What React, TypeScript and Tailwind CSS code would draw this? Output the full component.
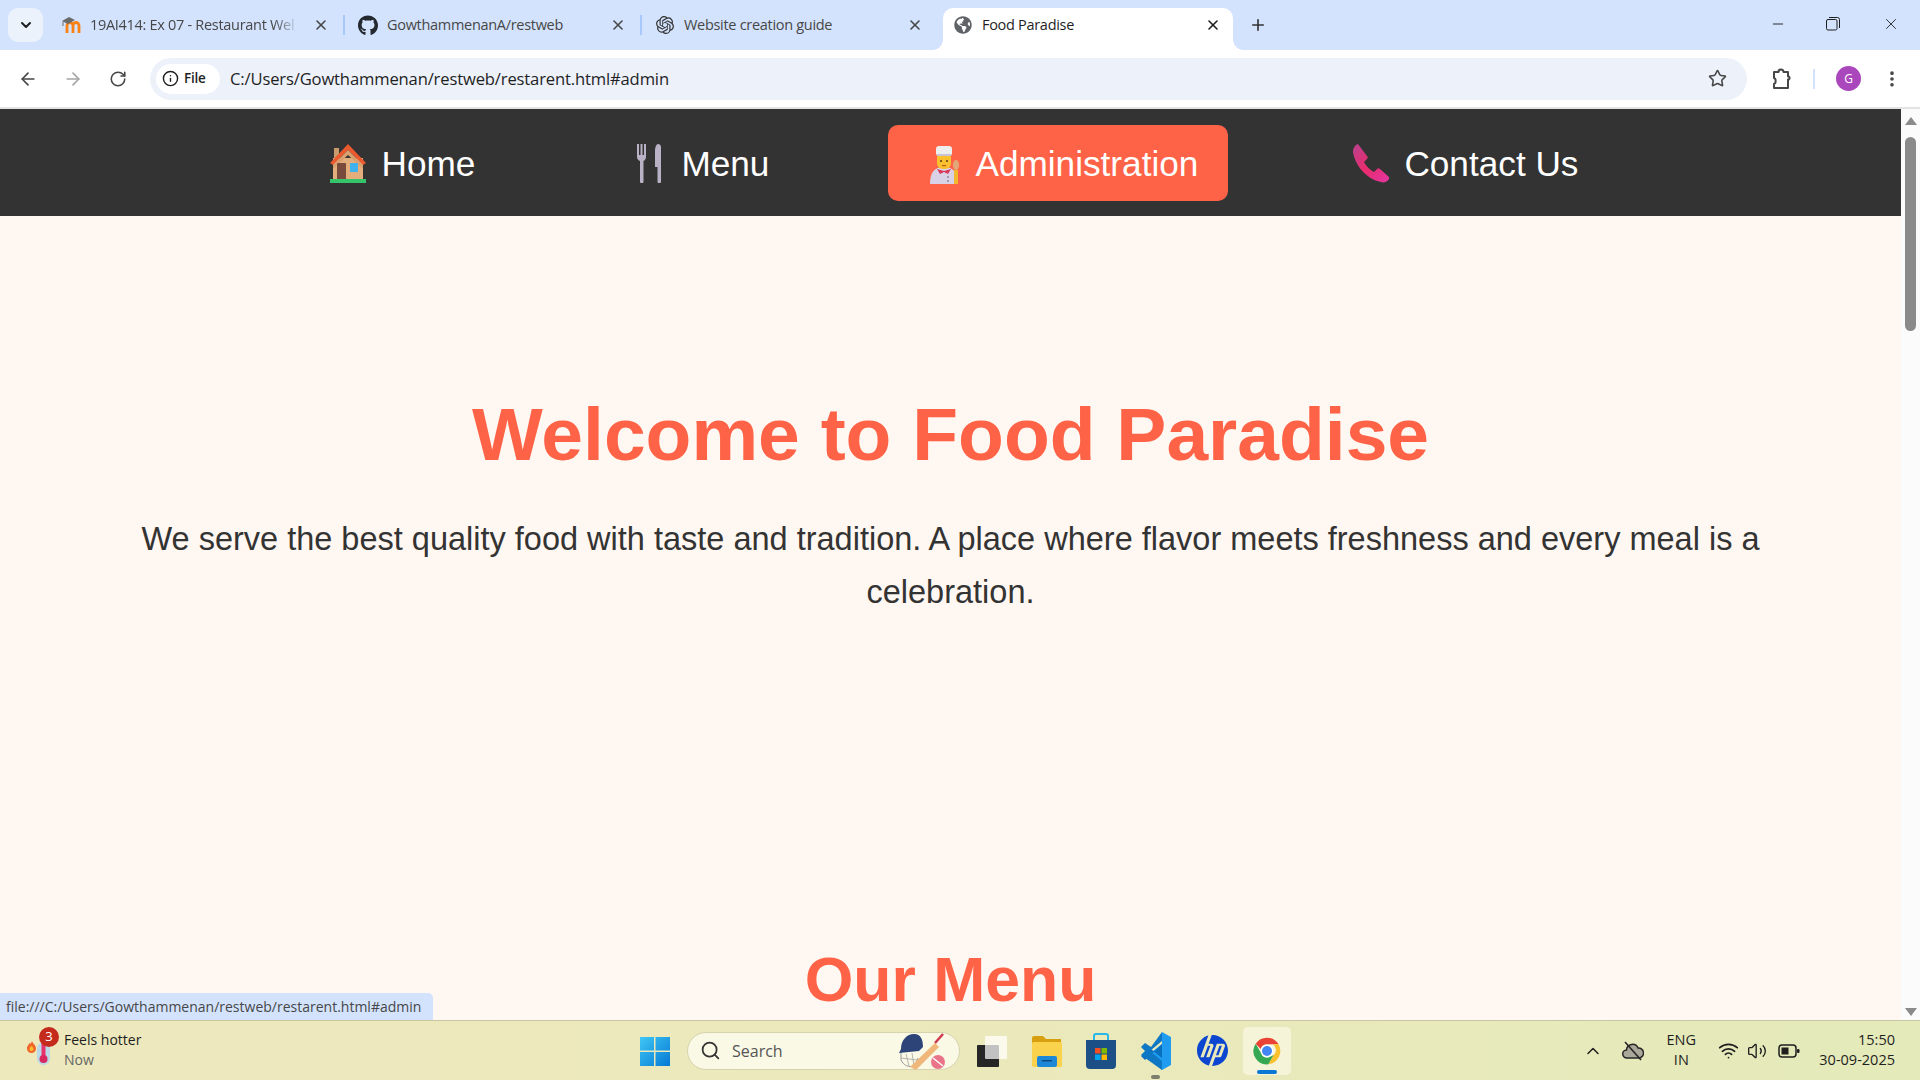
import React from "react";
import { FaGithub, FaGlobeAmericas } from "react-icons/fa";
import { SiOpenai, SiHp } from "react-icons/si";
import { ArrowLeft, ArrowRight, RotateCw, Info, Star, EllipsisVertical, X, Plus, Minus, ChevronDown, ChevronUp, Search, Wifi, Volume2 } from "lucide-react";

const ui = "font-['Open_Sans','Noto_Sans',sans-serif]";

function MoodleIcon() {
  return (
    <svg width="20" height="18" viewBox="0 0 20 18">
      <path d="M6 17V9.500a3 3 0 0 1 6 0V17M12 9.500a3 3 0 0 1 6 0V17" fill="none" stroke="#f98012" strokeWidth="2.800" />
      <path d="M1 5 L8 1 L14 4 L7 8 Z" fill="#6b6b6b" />
      <path d="M2 5.500V10" stroke="#6b6b6b" strokeWidth="1" />
    </svg>
  );
}

function Tab({ icon, title, active, sep, fade }: { icon: React.ReactNode; title: string; active?: boolean; sep?: boolean; fade?: boolean }) {
  return (
    <div className={`relative flex items-center h-[42px] pb-[8px] ${active ? "w-[290px] bg-white rounded-t-[10px] pl-[10px] pr-[12px] ml-[4px] mr-[5px]" : "w-[297px] pl-[13px] pr-[16px]"}`}>
      <span className="w-[20px] h-[20px] flex items-center justify-center shrink-0">{icon}</span>
      <span className={`ml-[9px] flex-1 overflow-hidden whitespace-nowrap text-[14.5px] tracking-[-0.3px] ${active ? "text-[#1f1f1f]" : "text-[#474747]"} ${fade ? "[mask-image:linear-gradient(90deg,#000_88%,transparent)] mr-[14px]" : ""}`}>{title}</span>
      <X size={16} strokeWidth={2.4} className={active ? "text-[#1f1f1f] shrink-0" : "text-[#474747] shrink-0"} />
      {sep && <span className="absolute right-0 top-[7px] w-[2px] h-[20px] bg-[#a8c7fa]" />}
      {active && <span className="absolute left-[-10px] bottom-0 w-[10px] h-[10px] bg-[radial-gradient(circle_at_0_0,#d3e3fd_9.5px,#ffffff_10px)]" />}
      {active && <span className="absolute right-[-10px] bottom-0 w-[10px] h-[10px] bg-[radial-gradient(circle_at_100%_0,#d3e3fd_9.5px,#ffffff_10px)]" />}
    </div>
  );
}

function HouseIcon() {
  return (
    <svg width="38" height="40" viewBox="0 0 38 40">
      <rect x="5" y="5" width="5" height="14" fill="#c99a6b" />
      <rect x="4" y="15" width="30" height="22" fill="#e3ad7c" />
      <path d="M19 1 L37 20 L34 22 L19 7 L4 22 L1 20 Z" fill="#ea5a2e" />
      <path d="M19 7 L34 22 L34 26 L19 12 L4 26 L4 22 Z" fill="#d9a06f" />
      <rect x="8" y="20" width="9" height="17" rx="1" fill="#7a4a3c" />
      <rect x="21" y="20" width="8" height="9" rx="1" fill="#3fb2ee" />
      <rect x="1" y="36" width="36" height="4" fill="#35c46a" />
    </svg>
  );
}
function CutleryIcon() {
  return (
    <svg width="30" height="40" viewBox="0 0 30 40" fill="#b9b2c6" className="ml-[6px]">
      <path d="M1 1h2v11h1.500V1h2v11H8V1h2v13c0 2-1.500 3.500-2.500 4V39a1.800 1.800 0 0 1-3.500 0V18C2.500 17.500 1 16 1 14Z" />
      <path d="M19 8c0-4 1.500-7 3-7s3 1 3 3v35a1.800 1.800 0 0 1-3.500 0V24H19Z" />
    </svg>
  );
}
function ChefIcon() {
  return (
    <svg width="32" height="42" viewBox="0 0 32 42" className="ml-[4px]">
      <path d="M2 42c0-10 3-17 14-17s13 7 13 17Z" fill="#d9d2e6" />
      <rect x="26" y="28" width="4" height="14" fill="#f2b92e" />
      <ellipse cx="28" cy="23" rx="3" ry="5" fill="#e0a878" />
      <rect x="8" y="4" width="16" height="10" rx="3" fill="#eeeeee" />
      <rect x="9" y="12" width="14" height="3" fill="#c9c4d4" />
      <path d="M9 14h14v7c0 4-3 6-7 6s-7-2-7-6Z" fill="#fbc02d" />
      <circle cx="13" cy="19" r="1" fill="#5b3a1d" />
      <circle cx="19" cy="19" r="1" fill="#5b3a1d" />
      <rect x="14" y="23" width="4" height="1.200" fill="#b55a20" />
      <path d="M9 27l7 2 7-2-3 5-4-2-4 2Z" fill="#d8365a" />
      <circle cx="20" cy="35" r="1" fill="#8f88a0" />
      <circle cx="20" cy="39" r="1" fill="#8f88a0" />
    </svg>
  );
}
function PhoneIcon() {
  return (
    <svg width="38" height="40" viewBox="0 0 38 40">
      <defs>
        <linearGradient id="ph" x1="0" y1="0" x2="1" y2="1">
          <stop offset="0" stopColor="#b8418e" />
          <stop offset="0.5" stopColor="#ea2c6e" />
          <stop offset="1" stopColor="#e236a2" />
        </linearGradient>
      </defs>
      <path d="M6 1 L15 13 C16 14 16 15 15 16 L12 19 C14 23 18 27 22 29 L25 26 C26 25 27 25 28 26 L37 34 L37 36 C35 39 32 40 29 39 C14 36 3 22 1 9 C1 5 3 2 6 1 Z" fill="url(#ph)" />
    </svg>
  );
}

function NavItem({ icon, label, active }: { icon: React.ReactNode; label: string; active?: boolean }) {
  return (
    <a className={`flex items-center h-[76px] px-[30px] rounded-[10px] text-[35.2px] text-white ${active ? "bg-[#ff6347]" : ""}`}>
      <span className="w-[47px] h-[44px] mr-[10px] flex items-center justify-center shrink-0">{icon}</span>
      <span className="pt-[3px]">{label}</span>
    </a>
  );
}

function WinLogo() {
  return (
    <svg width="30" height="30" viewBox="0 0 30 30">
      <defs>
        <linearGradient id="win" x1="0" y1="0" x2="1" y2="1">
          <stop offset="0" stopColor="#3fc8f5" />
          <stop offset="1" stopColor="#0678d4" />
        </linearGradient>
      </defs>
      <path d="M0 1h14v13.500H0ZM15.500 1H30v13.500H15.500ZM0 16h14v14H0ZM15.500 16H30v14H15.500Z" fill="url(#win)" />
    </svg>
  );
}
function TaskView() {
  return (
    <svg width="32" height="32" viewBox="0 0 32 32">
      <rect x="1" y="10" width="22" height="22" rx="1" fill="#262626" />
      <rect x="9" y="1" width="22" height="23" rx="1" fill="#ffffff" fillOpacity="0.72" />
    </svg>
  );
}
function Explorer() {
  return (
    <svg width="32" height="32" viewBox="0 0 32 32">
      <path d="M1 3a2 2 0 0 1 2-2h9l3 3h15v8H1Z" fill="#d8a010" />
      <rect x="1" y="7" width="30" height="25" rx="1.500" fill="#fbd24c" />
      <rect x="6" y="21" width="20" height="11" rx="2" fill="#1e88d8" />
      <rect x="11" y="25" width="10" height="1.500" fill="#0c4a80" />
    </svg>
  );
}
function Store() {
  return (
    <svg width="30" height="36" viewBox="0 0 30 36">
      <path d="M8 8V3a2 2 0 0 1 2-2h10a2 2 0 0 1 2 2v5" fill="none" stroke="#29b6e8" strokeWidth="2" />
      <path d="M0 7h30v25a4 4 0 0 1-4 4H4a4 4 0 0 1-4-4Z" fill="#1b4f86" />
      <rect x="9" y="15" width="5.500" height="5.500" fill="#f25022" />
      <rect x="15.500" y="15" width="5.500" height="5.500" fill="#7fba00" />
      <rect x="9" y="21.500" width="5.500" height="5.500" fill="#00a4ef" />
      <rect x="15.500" y="21.500" width="5.500" height="5.500" fill="#ffb900" />
    </svg>
  );
}
function VsCode() {
  return (
    <svg width="32" height="40" viewBox="0 0 32 40">
      <path d="M22 1 L31 6 V34 L22 39 L8 24 L22 13 Z" fill="#1f9cf0" />
      <path d="M22 13 V27 L6 14 L2 17 L8 20 L1 25 L5 29 L22 13 Z" fill="#0a6fbd" />
      <path d="M22 1 V10 L10 20 L22 30 V39 L1 24 L5 20 L1 16 L5 12 L11 16 Z" fill="#0f78c4" />
    </svg>
  );
}
function Chrome() {
  return (
    <svg width="32" height="38" viewBox="0 0 48 48">
      <path d="M24 4a20 20 0 0 1 17.320 10H24a10 10 0 0 0-9.500 6.900L7 13A20 20 0 0 1 24 4Z" fill="#ea4335" />
      <path d="M41.320 14A20 20 0 0 1 26 43.900L34 30a10 10 0 0 0-1-16Z" fill="#fbc02d" />
      <path d="M26 43.900A20 20 0 0 1 7 13l8 14a10 10 0 0 0 11 6.800l8-3.800Z" fill="#34a853" />
      <circle cx="24" cy="24" r="9.500" fill="#ffffff" />
      <circle cx="24" cy="24" r="7.500" fill="#4285f4" />
    </svg>
  );
}
function WeatherIcon() {
  return (
    <div className="relative w-[34px] h-[40px] shrink-0">
      <svg width="34" height="40" viewBox="0 0 34 40" className="absolute left-0 top-0">
        <rect x="11" y="12" width="13" height="23" rx="6.500" fill="#bcd9e8" />
        <rect x="15.500" y="12" width="4" height="18" fill="#e8326e" />
        <circle cx="17.500" cy="29" r="4" fill="#d9285f" />
        <path d="M6 11c1 3 4 4 4 7.500a4.500 4.500 0 0 1-9 0c0-3 2-3 2-5.500 1 1 2 1 3-2Z" fill="#f0662a" />
        <path d="M5.500 16c1 1 2 2 2 3a2 2 0 0 1-4 0c0-1 1-2 2-3Z" fill="#fbc02d" />
      </svg>
      <span className="absolute left-[13px] top-[-3px] w-[20px] h-[20px] rounded-full bg-[#c42b1c] text-white text-[13px] flex items-center justify-center">3</span>
    </div>
  );
}
function SearchArt() {
  return (
    <svg width="48" height="38" viewBox="0 0 48 38">
      <path d="M4 20v8c2 5 8 8 14 6l3-8" fill="none" stroke="#9a9a9a" strokeWidth="1" />
      <path d="M9 22l3 12M15 21l2 13M4 26l16 2" fill="none" stroke="#a5a5a5" strokeWidth="0.800" />
      <path d="M4 17 C4 8 10 2 17 2 C24 2 26 8 26 15 L22 19 L2 21 Z" fill="#2c4478" />
      <path d="M13 35 L38 11 L42 15 L19 38 Z" fill="#efb77a" />
      <path d="M38 11 L46 2" stroke="#d03a4e" strokeWidth="2.500" />
      <circle cx="41" cy="30" r="7" fill="#e9748a" />
      <path d="M36 26 L46 34" stroke="#ffffff" strokeWidth="1.500" />
    </svg>
  );
}
function ExtensionIcon() {
  return (
    <svg width="22" height="22" viewBox="0 0 22 22" fill="none" stroke="#474747" strokeWidth="2" strokeLinejoin="round">
      <path d="M3 4h4.500a2.500 2.500 0 0 1 5 0H17v4.500h1a2.500 2.500 0 0 1 0 3h-1V20H3v-4a2.500 2.500 0 0 0 1.500-3A2.500 2.500 0 0 0 3 10Z" />
    </svg>
  );
}
function CloudSlash() {
  return (
    <svg width="22" height="20" viewBox="0 0 22 20">
      <path d="M5 17a4 4 0 0 1-.5-8A6 6 0 0 1 16 7a4.500 4.500 0 0 1 1 10Z" fill="#a9a89a" stroke="#262626" strokeWidth="1.500" />
      <path d="M3 1 L19 19" stroke="#262626" strokeWidth="1.600" />
    </svg>
  );
}

export default function App() {
  return (
    <div className={`h-screen w-full flex flex-col overflow-hidden bg-white ${ui}`}>
      {/* Tab strip */}
      <div className="h-[50px] bg-[#d3e3fd] flex items-end shrink-0">
        <div className="w-[35px] h-[34px] ml-[8px] mb-[8px] rounded-[10px] bg-[#ecf2fc] flex items-center justify-center shrink-0">
          <ChevronDown size={16} strokeWidth={3} className="text-[#1f1f1f]" />
        </div>
        <div className="flex items-end ml-[5px]">
          <Tab icon={<MoodleIcon />} title="19AI414: Ex 07 - Restaurant Wel" sep fade />
          <Tab icon={<FaGithub size={21} className="text-[#24292f]" />} title="GowthammenanA/restweb" sep />
          <Tab icon={<SiOpenai size={18} className="text-[#333333]" />} title="Website creation guide" />
          <Tab icon={<FaGlobeAmericas size={18} className="text-[#5f6368]" />} title="Food Paradise" active />
        </div>
        <Plus size={18} strokeWidth={2.2} className="ml-[11px] mb-[16px] text-[#333333]" />
        <div className="ml-auto flex items-center h-[50px] pb-[2px]">
          <Minus size={16} strokeWidth={1.4} className="text-[#1f1f1f]" />
          <svg width="14" height="14" viewBox="0 0 14 14" className="ml-[40px]" fill="none" stroke="#1f1f1f" strokeWidth="1">
            <rect x="0.500" y="2.500" width="10.500" height="10.500" rx="1.500" />
            <path d="M3 0.500h8.500a2 2 0 0 1 2 2V11" />
          </svg>
          <X size={18} strokeWidth={1.2} className="ml-[42px] mr-[20px] text-[#1f1f1f]" />
        </div>
      </div>

      {/* Toolbar */}
      <div className="h-[57px] bg-white flex items-center shrink-0 border-b-2 border-[#e3e3e3] box-content">
        <ArrowLeft size={20} strokeWidth={2} className="ml-[18px] text-[#474747]" />
        <ArrowRight size={20} strokeWidth={2} className="ml-[25px] text-[#a5a5a5]" />
        <RotateCw size={18} strokeWidth={2.1} className="ml-[26px] text-[#474747]" />
        <div className="ml-[23px] w-[1597px] h-[42px] rounded-full bg-[#ecf1fa] flex items-center pl-[6px]">
          <div className="h-[30px] w-[64px] rounded-full bg-white flex items-center pl-[6px] shrink-0">
            <Info size={17} strokeWidth={2} className="text-[#1f1f1f]" />
            <span className="ml-[5px] text-[13.5px] font-semibold tracking-[-0.2px] text-[#1f1f1f]">File</span>
          </div>
          <span className="ml-[10px] pt-[2px] text-[16.6px] tracking-[-0.15px] text-[#1f1f1f]">C:/Users/Gowthammenan/restweb/restarent.html#admin</span>
          <Star size={19} strokeWidth={2} className="ml-auto mr-[20px] text-[#474747]" />
        </div>
        <span className="ml-[24px]"><ExtensionIcon /></span>
        <span className="ml-[20px] w-[2px] h-[20px] bg-[#d3e3fd]" />
        <span className="ml-[21px] w-[25px] h-[25px] rounded-full bg-[#ab47bc] text-white text-[12px] flex items-center justify-center">G</span>
        <EllipsisVertical size={20} strokeWidth={2.4} className="ml-[21px] text-[#474747]" />
      </div>

      {/* Page */}
      <div className="flex-1 min-h-0 flex relative">
        <main className="flex-1 min-w-0 overflow-hidden bg-[#fff7f1] font-['Liberation_Sans',Arial,sans-serif]">
          <nav className="h-[107px] pl-[2px] bg-[#333333] flex justify-center items-center gap-[89px]">
            <NavItem icon={<HouseIcon />} label="Home" />
            <NavItem icon={<CutleryIcon />} label="Menu" />
            <NavItem icon={<ChefIcon />} label="Administration" active />
            <NavItem icon={<PhoneIcon />} label="Contact Us" />
          </nav>
          <section className="pt-[175px] px-[130px] text-center">
            <h1 className="text-[75px] leading-[86px] font-bold text-[#ff6347]">Welcome to Food Paradise</h1>
            <p className="mt-[36px] text-[32.5px] leading-[52.5px] text-[#333333]">
              We serve the best quality food with taste and tradition. A place where flavor meets freshness and every meal is a celebration.
            </p>
            <h2 className="mt-[325px] text-[62.5px] leading-[72px] font-bold text-[#ff6347]">Our Menu</h2>
          </section>
        </main>
        <aside className="w-[19px] shrink-0 bg-[#fbfbfb] flex flex-col items-center">
          <span className="mt-[8px] w-0 h-0 border-x-[6px] border-x-transparent border-b-[8px] border-b-[#8a8a8a]" />
          <span className="mt-[12px] w-[11px] h-[194px] rounded-full bg-[#8a8a8a]" />
          <span className="mt-auto mb-[4px] w-0 h-0 border-x-[6px] border-x-transparent border-t-[8px] border-t-[#8a8a8a]" />
        </aside>
        <div className="absolute left-0 bottom-0 h-[27px] w-[433px] bg-[#d3e3fd] rounded-tr-[5px] pl-[6px] flex items-center text-[14px] text-[#474747] whitespace-nowrap">
          file:///C:/Users/Gowthammenan/restweb/restarent.html#admin
        </div>
      </div>

      {/* Taskbar */}
      <div className="h-[60px] shrink-0 border-t border-[#c9c6a2] bg-gradient-to-r from-[#eee8bd] via-[#ebe9bc] to-[#e4eaba] flex items-center text-[#1f1f1f]">
        <div className="w-[640px] flex items-center pl-[26px] pb-[2px] shrink-0">
          <WeatherIcon />
          <div className="ml-[4px] text-[14px] leading-[20px]">
            <div>Feels hotter</div>
            <div className="text-[#666666]">Now</div>
          </div>
        </div>
        <WinLogo />
        <div className="ml-[17px] w-[273px] h-[38px] rounded-full bg-[#f9f9e6] border border-[#d6d3ad] flex items-center pl-[12px] pr-[14px]">
          <Search size={21} strokeWidth={2} className="text-[#333333]" />
          <span className="ml-[11px] text-[16px] text-[#555555]">Search</span>
          <span className="ml-auto"><SearchArt /></span>
        </div>
        <div className="ml-[16px]"><TaskView /></div>
        <div className="ml-[23px]"><Explorer /></div>
        <div className="ml-[23px]"><Store /></div>
        <div className="ml-[24px] relative">
          <VsCode />
          <span className="absolute left-[11px] bottom-[-8px] w-[9px] h-[4px] rounded-full bg-[#7d7d70]" />
        </div>
        <SiHp size={31} className="ml-[25px] text-[#0b45d0]" />
        <div className="ml-[15px] relative w-[48px] h-[48px] rounded-[5px] bg-[#f5f4d8] flex items-center justify-center">
          <Chrome />
          <span className="absolute left-[14px] bottom-[1px] w-[20px] h-[4px] rounded-full bg-[#0a78d4]" />
        </div>
        <div className="ml-auto flex items-center pr-[25px]">
          <ChevronUp size={20} strokeWidth={1.8} className="text-[#1f1f1f]" />
          <span className="ml-[19px]"><CloudSlash /></span>
          <div className="ml-[19px] w-[36px] text-center text-[14.5px] leading-[20px] pb-[2px]">ENG<br />IN</div>
          <Wifi size={21} strokeWidth={2} className="ml-[19px] text-[#1f1f1f]" />
          <Volume2 size={20} strokeWidth={1.6} className="ml-[8px] text-[#1f1f1f]" />
          <svg width="22" height="14" viewBox="0 0 22 14" className="ml-[11px]" fill="none">
            <rect x="1" y="1" width="17" height="12" rx="3" stroke="#1f1f1f" strokeWidth="1.500" />
            <rect x="3.500" y="3.500" width="7" height="7" fill="#1f1f1f" />
            <rect x="19" y="5" width="2.500" height="4" rx="1" fill="#1f1f1f" />
          </svg>
          <div className="ml-[19px] text-right text-[14.5px] leading-[20px] pb-[2px]">15:50<br />30-09-2025</div>
        </div>
      </div>
    </div>
  );
}
